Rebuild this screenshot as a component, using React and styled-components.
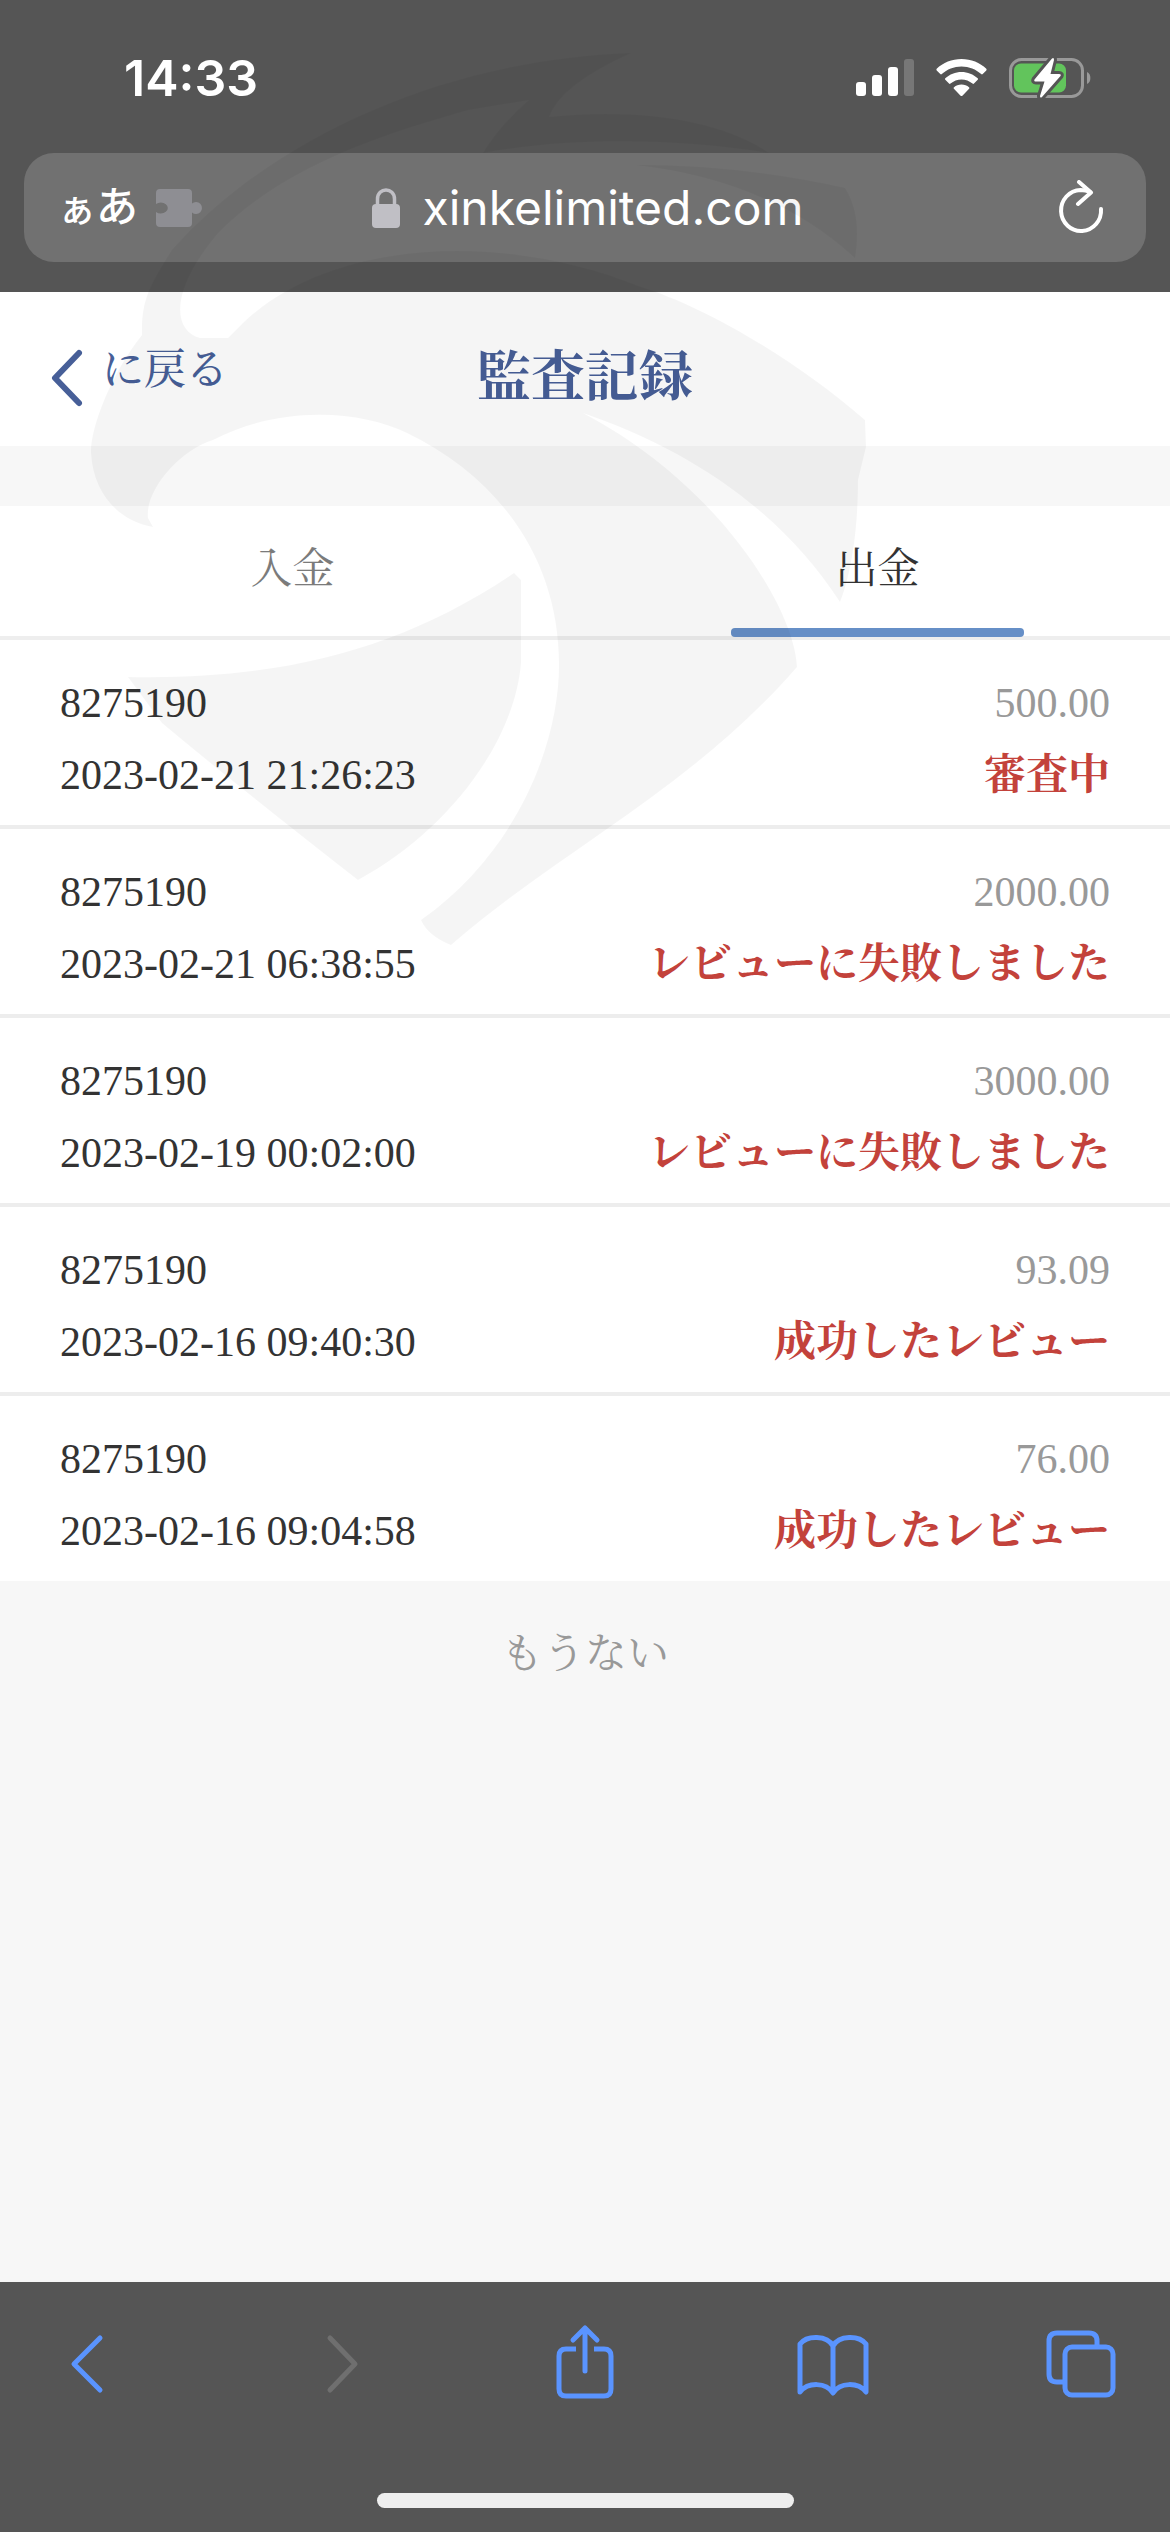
import React, { useState } from 'react';
import styled, { createGlobalStyle } from 'styled-components';

const GlobalStyle = createGlobalStyle`
  * {
    box-sizing: border-box;
  }

  body {
    margin: 0;
    background: #f7f7f7;
    font-family: 'Liberation Serif', 'Noto Serif CJK JP', 'Noto Sans CJK JP', serif;
    font-size: 42px;
    color: #333;
  }

  button {
    margin: 0;
    padding: 0;
    border: none;
    background: none;
    font: inherit;
    color: inherit;
    cursor: pointer;
  }

  svg {
    display: block;
    flex: none;
  }
`;

const Screen = styled.div`
  position: relative;
  display: flex;
  flex-direction: column;
  min-height: 100vh;
  overflow: hidden;
`;

const BrowserTop = styled.header`
  padding: 0 24px 30px;
  background: #555;
  color: #fff;
  font-family: Inter, 'Noto Sans CJK JP', sans-serif;
`;

const StatusBar = styled.div`
  display: flex;
  align-items: center;
  justify-content: space-between;
  height: 153px;
  padding: 2px 54px 0 100px;
`;

const Clock = styled.time`
  font-size: 50px;
  font-weight: 600;
  line-height: 60px;
`;

const StatusIcons = styled.div`
  display: flex;
  align-items: center;
  gap: 22px;
`;

const AddressBar = styled.div`
  display: grid;
  grid-template-columns: 1fr auto 1fr;
  align-items: center;
  height: 109px;
  padding: 0 40px 0 34px;
  border-radius: 30px;
  background: #717171;
`;

const ReaderButton = styled.button`
  display: flex;
  align-items: center;
  gap: 18px;
  justify-self: start;
  line-height: 60px;
`;

const ReaderGlyph = styled.span`
  font-size: 42px;
  font-weight: 500;

  small {
    font-size: 38px;
  }
`;

const UrlButton = styled.button`
  display: flex;
  align-items: center;
  gap: 22px;
  padding-left: 12px;
  font-size: 48px;
  line-height: 60px;
`;

const ReloadButton = styled.button`
  justify-self: end;
`;

const Page = styled.main`
  flex: 1;
`;

const PageHeader = styled.div`
  display: grid;
  grid-template-columns: 1fr auto 1fr;
  align-items: center;
  height: 154px;
  padding: 18px 50px 0;
  background: #fff;
  color: #475f98;
`;

const BackButton = styled.button`
  display: flex;
  align-items: flex-start;
  gap: 18px;
  justify-self: start;
  font-weight: 500;
  line-height: 44px;
`;

const PageTitle = styled.h1`
  margin: 0;
  font-size: 54px;
  font-weight: 700;
  line-height: 60px;
`;

const Tabs = styled.div`
  display: flex;
  height: 134px;
  margin-top: 60px;
  border-bottom: 4px solid #eee;
  background: #fff;
`;

const Tab = styled.button`
  position: relative;
  flex: 1;
  padding-bottom: 12px;
  color: ${props => (props.$active ? '#333' : '#7b7b7b')};

  &::after {
    content: '';
    display: ${props => (props.$active ? 'block' : 'none')};
    position: absolute;
    left: 25%;
    bottom: -1px;
    width: 50%;
    height: 9px;
    border-radius: 4px;
    background: #668fc7;
  }
`;

const RecordList = styled.ul`
  display: flex;
  flex-direction: column;
  gap: 4px;
  margin: 0;
  padding: 0;
  list-style: none;
  background: #ededed;
`;

const Record = styled.li`
  padding: 27px 60px 14px;
  background: #fff;
`;

const RecordLine = styled.div`
  display: flex;
  justify-content: space-between;
  line-height: 72px;
`;

const Amount = styled.span`
  color: #999;
`;

const ReviewStatus = styled.strong`
  color: #c3423b;
  font-weight: 700;
`;

const EndNote = styled.p`
  margin: 43px 0;
  color: #999;
  line-height: 60px;
  text-align: center;
`;

const BrowserBottom = styled.footer`
  padding: 38px 48px 24px;
  background: #555;
`;

const Toolbar = styled.nav`
  display: flex;
  justify-content: space-between;
  margin-bottom: 93px;
`;

const ToolButton = styled.button`
  color: #5a94ff;

  &:disabled {
    color: #6f6f6f;
    cursor: default;
  }
`;

const HomeIndicator = styled.div`
  width: 417px;
  height: 15px;
  margin: 0 auto;
  border-radius: 8px;
  background: #eee;
`;

const Watermark = styled.svg`
  position: absolute;
  top: 0;
  left: 80px;
  pointer-events: none;
`;

const stroke = {
  fill: 'none',
  stroke: 'currentColor',
  strokeLinecap: 'round',
  strokeLinejoin: 'round'
};

const SignalIcon = () => (
  <svg width="58" height="38" viewBox="0 0 58 38" fill="#fff">
    <rect x="0" y="23" width="10" height="14" rx="3" />
    <rect x="16" y="16" width="10" height="21" rx="3" />
    <rect x="32" y="8" width="10" height="29" rx="3" />
    <rect x="48" y="0" width="10" height="37" rx="3" opacity="0.2" />
  </svg>
);

const WifiIcon = () => (
  <svg width="51" height="38" viewBox="0 0 51 38" fill="#fff">
    <path d="M25.500 0C35 0 44 3.600 50.300 9.800Q51 10.600 50.300 11.400L46.700 15.100Q46 15.800 45.200 15.100C40 10.300 33 7.500 25.500 7.500S11 10.300 5.800 15.100Q5 15.800 4.300 15.100L.7 11.400Q0 10.600.7 9.800C7 3.600 16 0 25.500 0Z" />
    <path d="M25.500 13C31.600 13 37.400 15.300 41.700 19.300Q42.500 20 41.700 20.800L38 24.600Q37.300 25.300 36.500 24.600C33.500 21.900 29.600 20.400 25.500 20.400S17.500 21.900 14.500 24.600Q13.700 25.300 13 24.600L9.300 20.800Q8.500 20 9.300 19.300C13.600 15.300 19.400 13 25.500 13Z" />
    <path d="M25.500 25.600C28.400 25.600 31 26.600 33 28.300Q33.900 29 33.100 29.800L26.400 36.700Q25.500 37.500 24.600 36.700L17.900 29.800Q17.100 29 18 28.300C20 26.600 22.600 25.600 25.500 25.600Z" />
  </svg>
);

const BatteryIcon = () => (
  <svg width="83" height="42" viewBox="0 0 83 42">
    <rect x="1.500" y="2.500" width="72" height="37" rx="11" fill="none" stroke="#999" strokeWidth="3" />
    <path d="M78 15C82.500 16.500 82.500 25.500 78 27Z" fill="#999" />
    <rect x="5" y="6.500" width="52" height="29" rx="7" fill="#62c45c" />
    <path
      d="M43 1.500L25.500 22.500Q24.500 24.500 27 24.500H35.500L31 39Q31 41.500 33 40L51.500 19Q52.500 17 50 17H41.500L45 3Q45 0 43 1.500Z"
      fill="#fff"
      stroke="#555"
      strokeWidth="6"
      paintOrder="stroke"
    />
  </svg>
);

const PuzzleIcon = () => (
  <svg width="46" height="38" viewBox="0 0 46 38">
    <path
      d="M4 0H32Q36 0 36 4V14.500A6 6 0 1 1 36 23.500V34Q36 38 32 38H4Q0 38 0 34V23A7 5.500 0 1 0 0 15V4Q0 0 4 0Z"
      fill="#8e8e93"
    />
  </svg>
);

const LockIcon = () => (
  <svg width="28" height="40" viewBox="0 0 28 40">
    <path d="M5.500 18V11C5.500-1 22.500-1 22.500 11V18" fill="none" stroke="#c0bfc5" strokeWidth="3.500" />
    <rect x="0" y="16" width="28" height="24" rx="4" fill="#c0bfc5" />
  </svg>
);

const ReloadIcon = () => (
  <svg width="50" height="56" viewBox="-4 0 50 56" {...stroke} strokeWidth="4">
    <path d="M41 29A20 20.500 0 1 1 20.500 10Q26 10 30 12" />
    <path d="M19 2L31 12.500L18 24" />
  </svg>
);

const BackIcon = () => (
  <svg width="34" height="60" viewBox="0 0 34 60" {...stroke} strokeWidth="6">
    <path d="M29 5L5 30L29 55" />
  </svg>
);

const tools = [
  { key: 'back', label: '戻る', icon: <path d="M52 18L26 44L52 70" /> },
  { key: 'forward', label: '進む', disabled: true, icon: <path d="M33 18L58 44L33 70" /> },
  {
    key: 'share',
    label: '共有',
    icon: (
      <>
        <path d="M31 29H21Q14 29 14 36V69Q14 76 21 76H59Q66 76 66 69V36Q66 29 59 29H49" strokeLinecap="butt" />
        <path d="M40 51V8M28 20L40 8L52 20" />
      </>
    )
  },
  {
    key: 'bookmarks',
    label: 'ブックマーク',
    icon: (
      <path
        d="M39 26C33 15 13 15 6 24V72C14 62 32 62 39 73C46 62 64 62 72 72V24C65 15 45 15 39 26V72"
        strokeLinecap="butt"
      />
    )
  },
  {
    key: 'tabs',
    label: 'タブ',
    icon: (
      <>
        <path d="M22 62H15Q7 62 7 54V21Q7 13 15 13H47Q55 13 55 21V27" strokeLinecap="butt" />
        <rect x="23" y="27" width="48" height="48" rx="7" />
      </>
    )
  }
];

const records = [
  { account: '8275190', time: '2023-02-21 21:26:23', amount: '500.00', status: '審査中' },
  { account: '8275190', time: '2023-02-21 06:38:55', amount: '2000.00', status: 'レビューに失敗しました' },
  { account: '8275190', time: '2023-02-19 00:02:00', amount: '3000.00', status: 'レビューに失敗しました' },
  { account: '8275190', time: '2023-02-16 09:40:30', amount: '93.09', status: '成功したレビュー' },
  { account: '8275190', time: '2023-02-16 09:04:58', amount: '76.00', status: '成功したレビュー' }
];

const EagleWatermark = () => (
  <Watermark width="800" height="960" viewBox="80 0 800 960" fill="#000" fillOpacity="0.04" aria-hidden="true">
    <path d="M631 53C440 60 270 140 172 250C150 285 141 300 142 335C110 375 90 430 91 453C93 490 115 520 153 527L148 518C145 490 180 450 213 440C280 405 360 410 407 433C500 478 559 560 559 665C559 740 520 850 421 920Q428 936 451 945C560 850 690 790 797 667C795 610 720 485 583 413C690 450 780 510 840 602C845 590 858 550 858 480L866 447L865 420C790 355 700 305 641 287C500 230 330 240 243 323L228 338H200C172 330 170 290 218 233C290 160 400 130 468 110L529 100Q500 125 483 153C580 135 690 140 769 153C720 120 640 108 549 117Q560 85 631 53Z" />
    <path d="M636 165Q743 165 845 188Q862 215 855 258Q770 180 636 165Z" />
    <path d="M128 677C280 680 400 650 514 573L521 580V663C515 740 450 830 358 880Q230 780 162 723Z" />
  </Watermark>
);

const App = () => {
  const [activeTab, setActiveTab] = useState('出金');

  return (
    <Screen>
      <GlobalStyle />
      <BrowserTop>
        <StatusBar>
          <Clock>14:33</Clock>
          <StatusIcons>
            <SignalIcon />
            <WifiIcon />
            <BatteryIcon />
          </StatusIcons>
        </StatusBar>
        <AddressBar>
          <ReaderButton type="button">
            <ReaderGlyph>
              <small>ぁ</small>あ
            </ReaderGlyph>
            <PuzzleIcon />
          </ReaderButton>
          <UrlButton type="button">
            <LockIcon />
            xinkelimited.com
          </UrlButton>
          <ReloadButton type="button" aria-label="再読み込み">
            <ReloadIcon />
          </ReloadButton>
        </AddressBar>
      </BrowserTop>

      <Page>
        <PageHeader>
          <BackButton type="button">
            <BackIcon />
            に戻る
          </BackButton>
          <PageTitle>監査記録</PageTitle>
        </PageHeader>

        <Tabs role="tablist">
          {['入金', '出金'].map(name => (
            <Tab
              key={name}
              type="button"
              role="tab"
              aria-selected={activeTab === name}
              $active={activeTab === name}
              onClick={() => setActiveTab(name)}
            >
              {name}
            </Tab>
          ))}
        </Tabs>

        <RecordList>
          {records.map(({ account, time, amount, status }) => (
            <Record key={time}>
              <RecordLine>
                <span>{account}</span>
                <Amount>{amount}</Amount>
              </RecordLine>
              <RecordLine>
                <time>{time}</time>
                <ReviewStatus>{status}</ReviewStatus>
              </RecordLine>
            </Record>
          ))}
        </RecordList>
        <EndNote>もうない</EndNote>
      </Page>

      <BrowserBottom>
        <Toolbar>
          {tools.map(({ key, label, icon, disabled }) => (
            <ToolButton key={key} type="button" aria-label={label} disabled={disabled}>
              <svg width="80" height="80" viewBox="0 0 80 80" overflow="visible" {...stroke} strokeWidth="5">
                {icon}
              </svg>
            </ToolButton>
          ))}
        </Toolbar>
        <HomeIndicator />
      </BrowserBottom>
      <EagleWatermark />
    </Screen>
  );
};

export default App;
